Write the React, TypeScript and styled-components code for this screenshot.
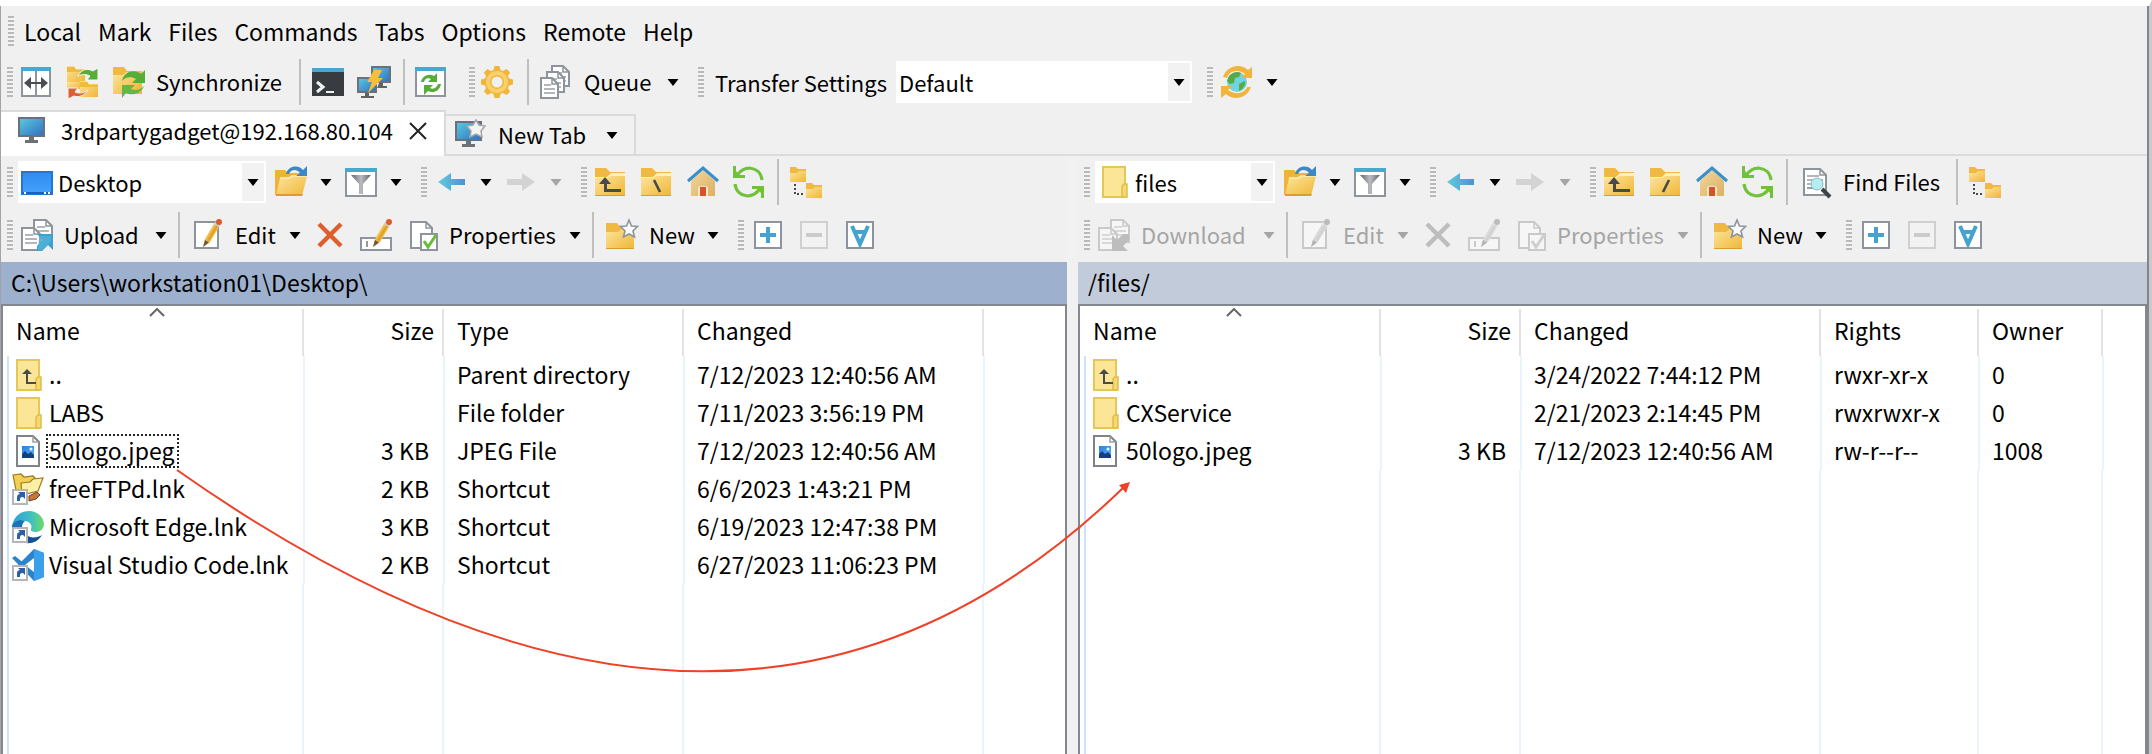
import React from 'react';
import styled, { createGlobalStyle, css } from 'styled-components';

const GlobalStyle = createGlobalStyle`
  *, *::before, *::after { box-sizing: border-box; }
  body { margin: 0; background: #f0f0f0; }
  button, select, table {
    font: inherit;
    color: inherit;
  }
`;

/* ---------- icons ---------- */

const Glyph = styled.svg<{ $size?: number; $muted?: boolean }>`
  display: block;
  flex: none;
  width: ${(p) => p.$size ?? 32}px;
  height: ${(p) => p.$size ?? 32}px;
  overflow: visible;
  ${(p) => p.$muted && css`filter: grayscale(1) opacity(0.42);`}
`;

const Defs = styled.svg`
  position: absolute;
  width: 0;
  height: 0;
`;

const Gradients = () => (
  <Defs aria-hidden="true">
    <defs>
      <linearGradient id="folder" x1="0" y1="0" x2="1" y2="1">
        <stop offset="0" stopColor="#fde59a" />
        <stop offset="1" stopColor="#efb637" />
      </linearGradient>
      <linearGradient id="screen" x1="0" y1="0" x2="1" y2="1">
        <stop offset="0" stopColor="#5ccbe0" />
        <stop offset="1" stopColor="#2f6fc0" />
      </linearGradient>
      <linearGradient id="back" x1="0" y1="0" x2="1" y2="0">
        <stop offset="0" stopColor="#62cbdc" />
        <stop offset="1" stopColor="#4795cf" />
      </linearGradient>
      <linearGradient id="funnel" x1="0" y1="0" x2="1" y2="0">
        <stop offset="0" stopColor="#62666b" />
        <stop offset="0.5" stopColor="#b9bdc2" />
        <stop offset="1" stopColor="#62666b" />
      </linearGradient>
      <linearGradient id="wall" x1="0" y1="0" x2="1" y2="1">
        <stop offset="0" stopColor="#f1d79d" />
        <stop offset="1" stopColor="#dcb062" />
      </linearGradient>
      <linearGradient id="desk" x1="0" y1="0" x2="0" y2="1">
        <stop offset="0" stopColor="#2f8bf0" />
        <stop offset="1" stopColor="#46a2fb" />
      </linearGradient>
      <linearGradient id="edge" x1="0" y1="0" x2="1" y2="0">
        <stop offset="0" stopColor="#2f9fd8" />
        <stop offset="0.6" stopColor="#3fc0c0" />
        <stop offset="1" stopColor="#6fdc62" />
      </linearGradient>
      <linearGradient id="photo" x1="0" y1="0" x2="1" y2="1">
        <stop offset="0" stopColor="#2a7fe0" />
        <stop offset="1" stopColor="#56b4f4" />
      </linearGradient>
    </defs>
  </Defs>
);

const FolderBase = () => (
  <>
    <path d="M0 2h11l4 4h15v24H0z" fill="#efb943" />
    <path d="M0 11h12l4-4h14v3H16l-3 2H0z" fill="#fff0be" />
    <path d="M0 12h13l3-2h14v20H0z" fill="url(#folder)" />
    <path d="M0 29h30v1H0z" fill="#d99f2c" />
  </>
);

const Doc = ({ x = 0, y = 0, w = 20, h = 24, lines = true }: { x?: number; y?: number; w?: number; h?: number; lines?: boolean }) => (
  <g transform={`translate(${x} ${y})`}>
    <path d={`M1 1h${w - 8}l6 6v${h - 8}H1z`} fill="#fff" stroke="#8d949b" strokeWidth="2" />
    <path d={`M${w - 7} 1v6h6`} fill="none" stroke="#8d949b" strokeWidth="1.5" />
    {lines && <path d={`M4 8h${w - 12}M4 12h${w - 8}M4 16h${w - 8}`} stroke="#9aa0a6" strokeWidth="1.6" />}
  </g>
);

const Pencil = () => (
  <>
    <path d="M11 28l2-8L22 5l5 3-9 15z" fill="#f3bd45" />
    <path d="M15 21L24 6l2 1.500-9 15z" fill="#e0a22d" />
    <path d="M11 28l2-7 4 2.500z" fill="#6b5a42" />
    <path d="M22 5l1.500-2.500 5 3L27 8z" fill="#c9ccd0" />
    <circle cx="27" cy="3" r="3" fill="#dd5a2b" />
  </>
);

const art: Record<string, React.ReactNode> = {
  split: (
    <>
      <path d="M1 3h28v27H1z" fill="#fff" stroke="#8d949b" strokeWidth="2" />
      <path d="M0 1h30v4H0z" fill="#47a9cd" />
      <path d="M15 5v25" stroke="#8d949b" strokeWidth="2" />
      <path d="M3 17l7-6v5h10v-5l7 6-7 6v-5H10v5z" fill="#4a4e53" />
    </>
  ),
  syncBoth: (
    <>
      <path d="M0 0h7l2 3h9v13H0z" fill="url(#folder)" />
      <path d="M13 15h7l2 3h9v13H13z" fill="url(#folder)" />
      <path d="M0 16h13v7H0z" fill="url(#folder)" />
      <path d="M0 1h7l2 3h9v2H0zM13 16h7l2 3h9v2H13z" fill="#efb943" />
      <path d="M11 10c3-7 10-8 15-5l5-3v12H20l3-4c-4-2-8-2-12 0z" fill="#56ad3a" stroke="#f6f6f6" strokeWidth="1" />
      <path d="M21 24c-3 5-9 8-14 6l-6 3V22h10l-3 4c4 2 9 1 13-2z" fill="#dd6032" stroke="#f6f6f6" strokeWidth="1" />
    </>
  ),
  syncFolder: (
    <>
      <path d="M0 1h11l3 4h15v23H0z" fill="#efb943" />
      <path d="M0 9h10l3-3h13v22H0z" fill="url(#folder)" />
      <path d="M9 15c2-10 13-12 19-7l4-4v13H19l4-4c-5-3-11-2-14 2z" fill="#56ad3a" />
      <path d="M31 20c-3 8-12 10-18 7l-4 5V19h13l-4 4c5 2 9 1 13-3z" fill="#63b93f" />
    </>
  ),
  terminal: (
    <>
      <path d="M-1 2h32v28H-1z" fill="#383b3f" />
      <path d="M-1 2h32v4H-1z" fill="#45a8cc" />
      <path d="M4 16l6 5-6 5" fill="none" stroke="#f2f2f2" strokeWidth="3" />
      <path d="M13 26h8" stroke="#f2f2f2" strokeWidth="2" />
    </>
  ),
  bolt: (
    <>
      <path d="M13 1h18v15H13z" fill="url(#screen)" stroke="#6d7176" strokeWidth="2" />
      <path d="M20 17h4v3h4v2H18z" fill="#5f6368" />
      <path d="M-1 12h18v14H-1z" fill="url(#screen)" stroke="#6d7176" strokeWidth="2" />
      <path d="M6 27h4v3h5v2H2v-2h4z" fill="#5f6368" />
      <path d="M15 4h8l-4 8h5L9 27l4-11H8z" fill="#f7bd3e" />
    </>
  ),
  refreshWindow: (
    <>
      <path d="M-1 3h29v27H-1z" fill="#fff" stroke="#8d949b" strokeWidth="2" />
      <path d="M-2 1h31v4H-2z" fill="#47a9cd" />
      <path d="M4 16c1-6 8-9 13-6l3-3v9h-9l3-3c-4-2-6 0-7 3z" fill="#56ad3a" />
      <path d="M24 18c-1 7-8 10-13 7l-4 4v-10h9l-3 3c4 2 7-1 8-4z" fill="#56ad3a" />
    </>
  ),
  gear: (
    <g transform="translate(14 16)">
      {[0, 45, 90, 135, 180, 225, 270, 315].map((a) => (
        <path key={a} d="M-4 -10l1.500-6h5l1.500 6z" fill="#f0b53a" transform={`rotate(${a})`} />
      ))}
      <circle r="9" fill="none" stroke="#f0b53a" strokeWidth="7" />
      <circle r="9" fill="none" stroke="#fad06c" strokeWidth="4" />
    </g>
  ),
  queue: (
    <>
      <Doc x={10} y={-1} w={19} h={22} />
      <Doc x={5} y={5} w={19} h={22} />
      <Doc x={-1} y={11} w={19} h={22} />
    </>
  ),
  globe: (
    <>
      <circle cx="16" cy="16" r="10" fill="#6fd3e2" />
      <path d="M8 10c4-4 9-5 12-3l-2 4-4 1-1 5-4 1-3-3zM18 18l6-3c1 4-2 8-6 10z" fill="#57ab45" />
      <path d="M2 11C6-1 20-3 27 4l4-3v11H20l4-4C18 3 8 4 6 12z" fill="#f2b53c" />
      <path d="M30 21C26 33 12 35 5 28l-5 4V20h11l-4 4c7 5 16 4 19-3z" fill="#f2b53c" />
    </>
  ),
  monitor: (
    <>
      <path d="M1 3h25v18H1z" fill="url(#screen)" stroke="#6d7176" strokeWidth="2" />
      <path d="M11 22h5v3h4v3H7v-3h4z" fill="#6d7176" />
    </>
  ),
  monitorStar: (
    <>
      <path d="M1 3h25v18H1z" fill="url(#screen)" stroke="#6d7176" strokeWidth="2" />
      <path d="M11 22h5v3h4v3H7v-3h4z" fill="#6d7176" />
      <path d="M21 1l3 5 6 1-4 5 1 6-6-3-6 3 1-6-4-5 6-1z" fill="#f4f4f4" stroke="#a4a8ad" strokeWidth="1.500" />
    </>
  ),
  desktop: (
    <>
      <path d="M1 6h30v22H1z" fill="url(#desk)" stroke="#2177cf" strokeWidth="2" />
      <path d="M2 26h28v2H2z" fill="#1b62b5" />
      <path d="M3 26h2v2H3zM23 26h2v2h-2zM27 26h2v2h-2z" fill="#fff" />
    </>
  ),
  openFolder: (
    <>
      <path d="M0 4h10l3 3h14v22H0z" fill="#efb437" />
      <path d="M5 12h9l3-2h15l-5 20H1z" fill="url(#folder)" />
      <path d="M5 12h9l3-2h15" fill="none" stroke="#fff0be" strokeWidth="1.500" />
      <path d="M1 30h26l1-2H1z" fill="#d99f2c" />
      <path d="M11 8c2-8 12-10 17-4l4-4v10H21l4-3c-3-4-9-4-11 1z" fill="#3b87c8" />
    </>
  ),
  filter: (
    <>
      <path d="M1 4h30v26H1z" fill="#fff" stroke="#8d949b" strokeWidth="2" />
      <path d="M0 2h32v4H0z" fill="#47a9cd" />
      <path d="M6 9h20l-8 9v10h-4V18z" fill="url(#funnel)" />
    </>
  ),
  back: <path d="M3 16L16 7v6h14v6H16v6z" fill="url(#back)" />,
  forward: <path d="M30 16L17 7v6H2v6h15v6z" fill="#d3d3d3" />,
  folderUp: (
    <>
      <FolderBase />
      <path d="M9 26V18H4l6-7 6 7h-4v5h14v3z" fill="#4a4a48" />
    </>
  ),
  folderBack: (
    <>
      <FolderBase />
      <path d="M13 14l6 12" stroke="#4a4a48" strokeWidth="2.600" />
    </>
  ),
  folderSlash: (
    <>
      <FolderBase />
      <path d="M19 14l-6 12" stroke="#4a4a48" strokeWidth="2.600" />
    </>
  ),
  home: (
    <>
      <path d="M4 15L16 4l12 11v15H4z" fill="url(#wall)" />
      <path d="M11 30V22c0-3 10-3 10 0v8z" fill="#f4e6c8" />
      <path d="M13 21h6v9h-6z" fill="#d9502a" />
      <path d="M1 15L16 2l15 13" fill="none" stroke="#3b8fc8" strokeWidth="3" />
    </>
  ),
  refresh: (
    <>
      <path d="M4 10C9-1 27-1 29 14" fill="none" stroke="#72c13c" strokeWidth="3.200" />
      <path d="M0 0h3v5l4 4h5v3H0z" fill="#72c13c" />
      <path d="M27 22C22 33 4 33 2 18" fill="none" stroke="#72c13c" strokeWidth="3.200" />
      <path d="M31 32h-3v-5l-4-4h-5v-3h12z" fill="#72c13c" />
    </>
  ),
  tree: (
    <>
      <path d="M-1 1h6l2 2h8v13H-1z" fill="#efb943" />
      <path d="M-1 7h7l2-2h7v11H-1z" fill="url(#folder)" />
      <path d="M15 17h6l2 2h8v13H15z" fill="#efb943" />
      <path d="M15 23h7l2-2h7v11H15z" fill="url(#folder)" />
      <path d="M4 18v10h10" fill="none" stroke="#4a4a48" strokeWidth="2" strokeDasharray="2 2" />
    </>
  ),
  find: (
    <>
      <Doc x={3} y={2} w={24} h={28} />
      <path d="M7 22h6" stroke="#9aa0a6" strokeWidth="2" />
      <circle cx="17" cy="18" r="6" fill="#b4edf2" stroke="#8fbcc4" strokeWidth="1" />
      <path d="M22 23l8 8" stroke="#3f4246" strokeWidth="4" />
    </>
  ),
  upload: (
    <>
      <Doc x={12} y={0} w={20} h={24} />
      <Doc x={0} y={8} w={20} h={24} />
      <path d="M16 15h16v16l-5-5-6 6h-5v-5l5-6z" fill="#3f9fd0" />
      <path d="M18 17h12v6l-9 8h-4z" fill="#54bcd8" opacity="0.600" />
    </>
  ),
  download: (
    <>
      <Doc x={12} y={0} w={20} h={24} />
      <Doc x={0} y={8} w={20} h={24} />
      <path d="M14 32V16l5 5 6-6h6v6l-6 6 5 5z" fill="#777" />
    </>
  ),
  edit: (
    <>
      <path d="M3 3h23v26H3z" fill="#fff" stroke="#8d949b" strokeWidth="2" />
      <Pencil />
    </>
  ),
  remove: <path d="M5 5l22 22M27 5L5 27" stroke="#dc5f2e" strokeWidth="4.500" />,
  rename: (
    <>
      <path d="M1 19h30v12H1z" fill="#fff" stroke="#8d949b" strokeWidth="2" />
      <path d="M7 22v6" stroke="#777" strokeWidth="1.500" />
      <g transform="translate(2 0)"><Pencil /></g>
    </>
  ),
  properties: (
    <>
      <Doc x={4} y={2} w={23} h={28} lines={false} />
      <path d="M15 15h16v16H15z" fill="#fff" stroke="#8d949b" strokeWidth="2" />
      <path d="M18 22l4 6 8-12" fill="none" stroke="#67bd35" strokeWidth="3" />
    </>
  ),
  newFolder: (
    <>
      <path d="M0 4h11l3 4h14v22H0z" fill="#efb943" />
      <path d="M0 13h12l4-3h12v20H0z" fill="url(#folder)" />
      <path d="M0 29h28v1H0z" fill="#d99f2c" />
      <path d="M23 1l2.500 6 6 .5-4.500 4.500 1.500 6-5.500-3-5.500 3 1.500-6-4.500-4.500 6-.5z" fill="#fafafa" stroke="#8d949b" strokeWidth="1.600" />
    </>
  ),
  plus: (
    <>
      <path d="M3 3h26v26H3z" fill="#fff" stroke="#8d949b" strokeWidth="2" />
      <path d="M16 8v16M8 16h16" stroke="#45a3cf" strokeWidth="4" />
    </>
  ),
  minus: (
    <>
      <path d="M3 3h26v26H3z" fill="#f2f2f2" stroke="#cfcfcf" strokeWidth="2" />
      <path d="M8 16h16" stroke="#cbcbcb" strokeWidth="4" />
    </>
  ),
  invert: (
    <>
      <path d="M3 3h26v26H3z" fill="#fff" stroke="#8d949b" strokeWidth="2" />
      <path d="M8 7l8 18 8-18M10 13h12" fill="none" stroke="#45a3cf" strokeWidth="4" />
    </>
  ),
  folder: (
    <>
      <path d="M5 1h22v30H5z" fill="#fbe597" stroke="#e6c655" strokeWidth="2" />
      <path d="M24 20l2-2h3v13h-5z" fill="#f6d873" stroke="#e0bd49" strokeWidth="1.500" />
    </>
  ),
  parent: (
    <>
      <path d="M5 1h22v30H5z" fill="#fbe597" stroke="#e6c655" strokeWidth="2" />
      <path d="M24 20l2-2h3v13h-5z" fill="#f6d873" stroke="#e0bd49" strokeWidth="1.500" />
      <path d="M14 25V15h-4l5-5 5 5h-4v8h8v2z" fill="#4a4a48" />
    </>
  ),
  jpeg: (
    <>
      <path d="M5 1h16l6 6v24H5z" fill="#fff" stroke="#7f8387" strokeWidth="2" />
      <path d="M21 1v6h6" fill="none" stroke="#9a9da1" strokeWidth="1.500" />
      <path d="M10 11h12v12H10z" fill="url(#photo)" />
      <path d="M10 19l3-3 3 3 3-2 3 3v3H10z" fill="#173f80" />
      <circle cx="19" cy="14" r="1.500" fill="#e6f5ff" />
    </>
  ),
  ftp: (
    <>
      <path d="M1 2l8-1 3 3 9-1 2 2-2 12-16 5z" fill="#f2cf55" stroke="#9c7a22" strokeWidth="1.200" />
      <path d="M9 10l9-1 3-3 10-1-5 13-16 4z" fill="#fdf0a6" stroke="#9c7a22" strokeWidth="1.200" />
      <path d="M17 23l8-4 3 3-4 4-7 2z" fill="#c7773a" stroke="#6d4221" strokeWidth="1" />
    </>
  ),
  edge: (
    <>
      <path d="M0 15C2 4 10 0 17 0c9 0 15 7 15 13 0 5-4 8-8 8-3 0-6-1-5-3 1-2 1-7-6-8C7 9 2 12 0 18z" fill="url(#edge)" />
      <path d="M0 15c2-5 8-7 13-5-4 3-4 9 0 14 4 4 10 5 16 1-3 5-9 8-15 7C6 31-1 25 0 15z" fill="#1d6fb8" />
      <path d="M13 22c4 6 12 5 17 2-3 5-8 8-14 8z" fill="#154f96" />
    </>
  ),
  vscode: (
    <>
      <path d="M0 9l3-2 21 17V8L3 25l-3-3 22-22 10 4v24l-10 4z" fill="#2a83cb" />
      <path d="M22 0l10 4v24l-10 4z" fill="#3ba0ea" />
      <path d="M22 9v14l-9-7z" fill="#fff" />
    </>
  ),
};

const Shortcut = () => (
  <>
    <path d="M1 17h14v14H1z" fill="#fff" stroke="#b5b5b5" strokeWidth="2" />
    <path d="M5 28v-3c0-3 1-4 3-4l-2-2h7v7l-2-2c-3 0-3 1-3 4z" fill="#2d5fa6" />
  </>
);

const Icon = ({ name, muted, link }: { name: string; muted?: boolean; link?: boolean }) => (
  <Glyph viewBox="0 0 32 32" $muted={muted} aria-hidden="true">
    {art[name]}
    {link && <Shortcut />}
  </Glyph>
);

/* ---------- window frame ---------- */

const Window = styled.div`
  position: relative;
  display: flex;
  flex-direction: column;
  min-height: 100vh;
  background: #f0f0f0;
  border-top: 6px solid #fff;
  border-right: 3px solid #c9cacd;
  color: #000;
  font-family: "Noto Sans CJK SC", "Open Sans", sans-serif;
  font-size: 23px;
  line-height: 30px;
`;

const Frame = styled.div`
  flex: 1;
  display: flex;
  flex-direction: column;
  border-left: 1px solid #a3a3a8;
  border-right: 2px solid #85868c;
`;

const MenuBar = styled.nav`
  display: flex;
  align-items: center;
  height: 52px;
  padding: 0 0 2px 7px;
`;

const MenuItem = styled.button`
  border: 0;
  background: none;
  padding: 0 0 0 9px;
  margin-right: 8px;
`;

const Toolbar = styled.div<{ $h?: number }>`
  display: flex;
  align-items: center;
  height: ${(p) => p.$h ?? 52}px;
  padding-left: 6px;
  font-size: 22px;
`;

const Grip = styled.span<{ $first?: boolean }>`
  flex: none;
  width: 6px;
  height: 30px;
  margin: 0 1px 0 ${(p) => (p.$first ? 0 : 13)}px;
  background: repeating-linear-gradient(#b9b9b9 0 2px, #f4f4f4 2px 4px);
`;

const Separator = styled.span`
  flex: none;
  width: 2px;
  height: 46px;
  margin: 0 5px;
  background: #bfbfbf;
`;

const ToolButton = styled.button`
  display: flex;
  align-items: center;
  gap: 11px;
  padding: 0 7px;
  border: 0;
  background: none;
  white-space: nowrap;
  &:disabled { color: #a5a5a5; }
`;

const ToolText = styled.span<{ $w: number }>`
  width: ${(p) => p.$w}px;
  padding-bottom: 2px;
  text-align: left;
`;

const CaretButton = styled.button`
  display: flex;
  flex: none;
  padding: 0 7px;
  border: 0;
  background: none;
  color: #000;
  &:disabled { color: #a5a5a5; }
`;

const CaretGlyph = styled.svg`
  display: block;
  flex: none;
  width: 10px;
  height: 7px;
  overflow: visible;
`;

const Caret = () => (
  <CaretGlyph viewBox="0 0 10 7" aria-hidden="true">
    <path d="M-.5 0h11L5 7z" fill="currentColor" />
  </CaretGlyph>
);

const Combo = styled.div<{ $w: number }>`
  display: flex;
  align-items: center;
  flex: none;
  width: ${(p) => p.$w}px;
  height: 42px;
  margin: 0 2px 0 4px;
  padding: 2px 2px 2px 3px;
  gap: 5px;
  background: #fff;
`;

const ComboSelect = styled.select`
  flex: 1;
  min-width: 0;
  height: 38px;
  padding: 0;
  border: 0;
  background: transparent;
  appearance: none;
`;

const ComboArrow = styled.span`
  display: flex;
  align-items: center;
  justify-content: center;
  width: 22px;
  height: 38px;
  background: #f2f2f2;
  pointer-events: none;
`;

const SettingsLabel = styled.label`
  width: 177px;
  margin-left: 10px;
  white-space: nowrap;
`;

type ToolProps = { icon: string; name: string; text?: string; w?: number; caret?: boolean; off?: boolean };

const Tool = ({ icon, name, text, w = 0, caret, off }: ToolProps) => (
  <>
    <ToolButton aria-label={text ? undefined : name} disabled={off}>
      <Icon name={icon} muted={off && icon !== 'forward' && icon !== 'minus'} />
      {text && <ToolText $w={w}>{text}</ToolText>}
    </ToolButton>
    {caret && (
      <CaretButton aria-label={`${name} options`} disabled={off}>
        <Caret />
      </CaretButton>
    )}
  </>
);

/* ---------- session tabs ---------- */

const TabStrip = styled.div`
  display: flex;
  align-items: flex-end;
  height: 50px;
  font-size: 22px;
  box-shadow: inset 0 -2px #dcdcdc;
`;

const ActiveTab = styled.div`
  display: flex;
  align-items: center;
  height: 46px;
  padding: 0 17px 6px 17px;
  background: #fff;
  border-top: 2px solid #dadada;
  border-right: 2px solid #dadada;
`;

const TabText = styled.span<{ $w: number }>`
  width: ${(p) => p.$w}px;
  margin-left: 11px;
  padding-bottom: 2px;
  text-align: left;
`;

const CloseButton = styled.button`
  display: flex;
  padding: 0;
  border: 0;
  background: none;
  margin-left: 15px;
`;

const NewTab = styled.button`
  display: flex;
  align-items: center;
  height: 42px;
  padding: 0 17px 0 9px;
  border: solid #dadada;
  border-width: 2px 2px 2px 0;
  background: #f1f1f1;
`;

/* ---------- panels ---------- */

const Panels = styled.div`
  flex: 1;
  display: flex;
`;

const Panel = styled.section<{ $grow: number }>`
  flex: ${(p) => p.$grow} 1 0;
  min-width: 0;
  display: flex;
  flex-direction: column;
`;

const Splitter = styled.div`
  flex: none;
  width: 11px;
  background: #f1f1f1;
`;

const PathBar = styled.div<{ $active?: boolean }>`
  height: 42px;
  padding: 5px 10px;
  background: ${(p) => (p.$active ? '#9db1ce' : '#c1cbda')};
`;

const FileView = styled.div`
  flex: 1;
  display: flex;
  flex-direction: column;
  background: #fff;
  border: 2px solid #828790;
  border-bottom: 0;
`;

const Table = styled.table`
  table-layout: fixed;
  width: 100%;
  border-collapse: collapse;
`;

const HeadCell = styled.th<{ $right?: boolean; $last?: boolean }>`
  position: relative;
  height: 50px;
  padding: 0 10px 2px 13px;
  font-weight: 400;
  text-align: ${(p) => (p.$right ? 'right' : 'left')};
  background: ${(p) => (p.$last ? 'none' : 'linear-gradient(#e3e3e3, #e3e3e3) right bottom / 2px 47px no-repeat')};
`;

const SortMark = styled.svg`
  position: absolute;
  top: 2px;
  left: 50%;
  width: 16px;
  height: 9px;
  margin-left: -5px;
`;

const guide = css<{ $right?: boolean; $last?: boolean; $name?: boolean }>`
  border-right: ${(p) => (p.$last ? 0 : 2)}px solid #ebf4fd;
  ${(p) => p.$name && css`background: linear-gradient(#cfe2fa, #cfe2fa) 4px 0 / 2px 100% no-repeat;`}
`;

const Cell = styled.td<{ $right?: boolean; $last?: boolean; $name?: boolean }>`
  height: 38px;
  padding: ${(p) => (p.$name ? '0 0 0 9px' : '0 14px 2px 12px')};
  text-align: ${(p) => (p.$right ? 'right' : 'left')};
  white-space: nowrap;
  ${guide}
`;

const FileName = styled.span`
  display: flex;
  align-items: center;
  gap: 2px;
`;

const NameText = styled.span<{ $focus?: boolean }>`
  height: 34px;
  padding: 0 3px 0 1px;
  line-height: 28px;
  border: 2px dotted ${(p) => (p.$focus ? '#222' : 'transparent')};
`;

const Filler = styled.div`
  flex: 1;
  display: flex;
`;

const FillerColumn = styled.div<{ $w: number; $name?: boolean }>`
  flex: none;
  width: ${(p) => p.$w}px;
  ${guide}
`;

type Column = { title: string; w: number; right?: boolean };
type FileRow = { icon: string; link?: boolean; focus?: boolean; cells: string[] };

const localColumns: Column[] = [
  { title: 'Name', w: 301 },
  { title: 'Size', w: 140, right: true },
  { title: 'Type', w: 240 },
  { title: 'Changed', w: 300 },
];

const localRows: FileRow[] = [
  { icon: 'parent', cells: ['..', '', 'Parent directory', '7/12/2023 12:40:56 AM'] },
  { icon: 'folder', cells: ['LABS', '', 'File folder', '7/11/2023 3:56:19 PM'] },
  { icon: 'jpeg', focus: true, cells: ['50logo.jpeg', '3 KB', 'JPEG File', '7/12/2023 12:40:56 AM'] },
  { icon: 'ftp', link: true, cells: ['freeFTPd.lnk', '2 KB', 'Shortcut', '6/6/2023 1:43:21 PM'] },
  { icon: 'edge', link: true, cells: ['Microsoft Edge.lnk', '3 KB', 'Shortcut', '6/19/2023 12:47:38 PM'] },
  { icon: 'vscode', link: true, cells: ['Visual Studio Code.lnk', '2 KB', 'Shortcut', '6/27/2023 11:06:23 PM'] },
];

const remoteColumns: Column[] = [
  { title: 'Name', w: 301 },
  { title: 'Size', w: 140, right: true },
  { title: 'Changed', w: 300 },
  { title: 'Rights', w: 158 },
  { title: 'Owner', w: 124 },
];

const remoteRows: FileRow[] = [
  { icon: 'parent', cells: ['..', '', '3/24/2022 7:44:12 PM', 'rwxr-xr-x', '0'] },
  { icon: 'folder', cells: ['CXService', '', '2/21/2023 2:14:45 PM', 'rwxrwxr-x', '0'] },
  { icon: 'jpeg', cells: ['50logo.jpeg', '3 KB', '7/12/2023 12:40:56 AM', 'rw-r--r--', '1008'] },
];

const FileList = ({ columns, rows }: { columns: Column[]; rows: FileRow[] }) => (
  <FileView>
    <Table>
      <colgroup>
        {columns.map((c) => <col key={c.title} width={c.w} />)}
        <col />
      </colgroup>
      <thead>
        <tr>
          {columns.map((c, i) => (
            <HeadCell key={c.title} $right={c.right} scope="col">
              {c.title}
              {i === 0 && (
                <SortMark viewBox="0 0 16 9" aria-hidden="true">
                  <path d="M1 8l7-7 7 7" fill="none" stroke="#666" strokeWidth="2" />
                </SortMark>
              )}
            </HeadCell>
          ))}
          <HeadCell as="td" $last />
        </tr>
      </thead>
      <tbody>
        {rows.map((r) => (
          <tr key={r.cells[0]}>
            {r.cells.map((text, i) => (
              <Cell key={i} $name={i === 0} $right={columns[i].right}>
                {i === 0 ? (
                  <FileName>
                    <Icon name={r.icon} link={r.link} />
                    <NameText $focus={r.focus}>{text}</NameText>
                  </FileName>
                ) : text}
              </Cell>
            ))}
            <Cell $last />
          </tr>
        ))}
      </tbody>
    </Table>
    <Filler aria-hidden="true">
      {columns.map((c, i) => <FillerColumn key={c.title} $w={c.w} $name={i === 0} />)}
    </Filler>
  </FileView>
);

type PanelToolsProps = {
  place: string; placeIcon: string; comboWidth: number;
  root: string; transfer: string; transferWidth: number; remote?: boolean;
};

const PanelTools = ({ place, placeIcon, comboWidth, root, transfer, transferWidth, remote }: PanelToolsProps) => (
  <>
    <Toolbar>
      <Grip $first />
      <Combo $w={comboWidth}>
        <Icon name={placeIcon} />
        <ComboSelect aria-label="Directory" defaultValue={place}>
          <option>{place}</option>
        </ComboSelect>
        <ComboArrow><Caret /></ComboArrow>
      </Combo>
      <Tool icon="openFolder" name="Open directory" caret />
      <Tool icon="filter" name="Filter" caret />
      <Grip />
      <Tool icon="back" name="Back" caret />
      <Tool icon="forward" name="Forward" caret off />
      <Grip />
      <Tool icon="folderUp" name="Parent directory" />
      <Tool icon={root} name="Root directory" />
      <Tool icon="home" name="Home directory" />
      <Tool icon="refresh" name="Refresh" />
      <Separator />
      {remote && (
        <>
          <Tool icon="find" name="Find" text="Find Files" w={101} />
          <Separator />
        </>
      )}
      <Tool icon="tree" name="Tree" />
    </Toolbar>
    <Toolbar $h={54}>
      <Grip $first />
      <Tool icon={transfer === 'Upload' ? 'upload' : 'download'} name={transfer} text={transfer} w={transferWidth} caret off={remote} />
      <Separator />
      <Tool icon="edit" name="Edit" text="Edit" w={41} caret off={remote} />
      <Tool icon="remove" name="Delete" off={remote} />
      <Tool icon="rename" name="Rename" off={remote} />
      <Tool icon="properties" name="Properties" text="Properties" w={107} caret off={remote} />
      <Separator />
      <Tool icon="newFolder" name="New" text="New" w={45} caret />
      <Grip />
      <Tool icon="plus" name="Select" />
      <Tool icon="minus" name="Unselect" off />
      <Tool icon="invert" name="Invert selection" />
    </Toolbar>
  </>
);

/* ---------- transfer arrow ---------- */

const Overlay = styled.svg`
  position: absolute;
  top: -6px;
  left: 0;
  width: 2152px;
  height: 754px;
  pointer-events: none;
`;

const Clip = styled.div`
  overflow-x: clip;
`;

export default function App() {
  return (
    <Clip>
      <Window>
        <GlobalStyle />
        <Gradients />
        <Frame>
          <MenuBar>
            <Grip $first />
            {['Local', 'Mark', 'Files', 'Commands', 'Tabs', 'Options', 'Remote', 'Help'].map((m) => (
              <MenuItem key={m}>{m}</MenuItem>
            ))}
          </MenuBar>
          <Toolbar $h={48}>
            <Grip $first />
            <Tool icon="split" name="Compare" />
            <Tool icon="syncBoth" name="Synchronize browsing" />
            <Tool icon="syncFolder" name="Synchronize" text="Synchronize" w={131} />
            <Separator />
            <Tool icon="terminal" name="Terminal" />
            <Tool icon="bolt" name="Open in PuTTY" />
            <Separator />
            <Tool icon="refreshWindow" name="Keep up to date" />
            <Grip />
            <Tool icon="gear" name="Preferences" />
            <Separator />
            <Tool icon="queue" name="Queue" text="Queue" w={70} caret />
            <Grip />
            <SettingsLabel htmlFor="transfer-settings">Transfer Settings</SettingsLabel>
            <Combo $w={296}>
              <ComboSelect id="transfer-settings" defaultValue="Default">
                <option>Default</option>
              </ComboSelect>
              <ComboArrow><Caret /></ComboArrow>
            </Combo>
            <Grip />
            <Tool icon="globe" name="Reconnect" caret />
          </Toolbar>
          <TabStrip>
            <ActiveTab>
              <Icon name="monitor" />
              <TabText $w={333}>3rdpartygadget@192.168.80.104</TabText>
              <CloseButton aria-label="Close tab">
                <Glyph $size={18} viewBox="0 0 18 18" aria-hidden="true">
                  <path d="M1 1l16 16M17 1L1 17" stroke="#222" strokeWidth="2" />
                </Glyph>
              </CloseButton>
            </ActiveTab>
            <NewTab>
              <Icon name="monitorStar" />
              <TabText $w={109}>New Tab</TabText>
              <Caret />
            </NewTab>
          </TabStrip>
          <Panels>
            <Panel $grow={1066}>
              <PanelTools place="Desktop" placeIcon="desktop" comboWidth={248} root="folderBack" transfer="Upload" transferWidth={78} />
              <PathBar $active>C:\Users\workstation01\Desktop\</PathBar>
              <FileList columns={localColumns} rows={localRows} />
            </Panel>
            <Splitter />
            <Panel $grow={1069}>
              <PanelTools place="files" placeIcon="folder" comboWidth={180} root="folderSlash" transfer="Download" transferWidth={109} remote />
              <PathBar>/files/</PathBar>
              <FileList columns={remoteColumns} rows={remoteRows} />
            </Panel>
          </Panels>
        </Frame>
        <Overlay viewBox="0 0 2152 754" aria-hidden="true">
          <path d="M177 470Q736 864 1124 487" fill="none" stroke="#ee4127" strokeWidth="2" />
          <path d="M1130 482l-4 11-7-8z" fill="#ee4127" />
        </Overlay>
      </Window>
    </Clip>
  );
}
